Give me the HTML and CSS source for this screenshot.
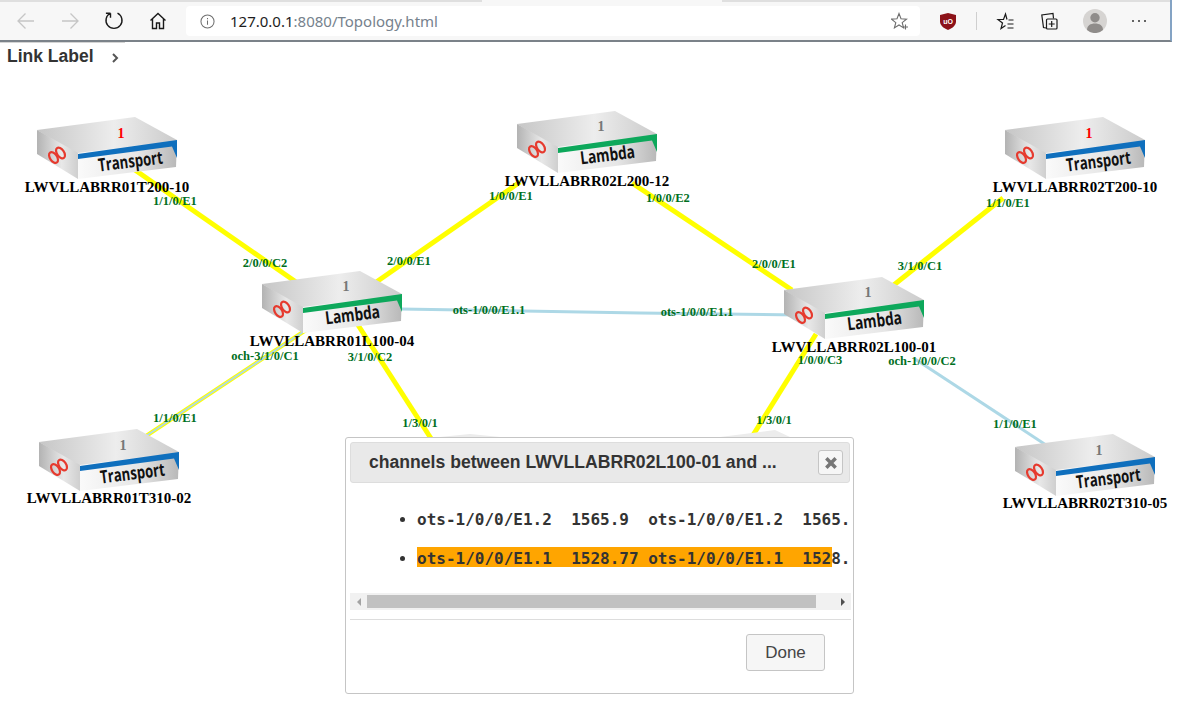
FILE: index.html
```html
<!DOCTYPE html>
<html lang="en">
<head>
  <meta charset="UTF-8" />
  <meta name="viewport" content="width=device-width, initial-scale=1.0" />
  <title>Topology</title>
  <link rel="stylesheet" href="styles.css">
</head>
<body>
  <header class="browser">
    <div class="tabstrip"><span class="tab"></span></div>
    <div class="toolbar">
      <span class="tool"><svg class="ico" viewBox="0 0 20 20"><path class="faint" d="M18 10H2M9.500 2.500 2 10l7.500 7.500"/></svg></span>
      <span class="tool"><svg class="ico" viewBox="0 0 20 20"><path class="faint" d="M2 10h16M10.500 2.500 18 10l-7.500 7.500"/></svg></span>
      <span class="tool"><svg class="ico" viewBox="0 0 20 20"><path class="line" d="M6.500 2.200A8 8 0 1 0 13.500 2.200M6.500 2.200V6.800M6.500 2.200H1.900"/></svg></span>
      <span class="tool"><svg class="ico" viewBox="0 0 20 20"><path class="line" d="M2.500 9.500 10 2.500l7.500 7M4.500 8v9.500h4v-5.500h3v5.500h4V8"/></svg></span>
      <div class="address">
        <svg class="info" viewBox="0 0 16 16"><circle cx="8" cy="8" r="7"/><path d="M8 7v4.500M8 4.200v1.400"/></svg>
        <span class="url"><b>127.0.0.1</b>:8080/Topology.html</span>
        <svg class="fav" viewBox="0 0 18 18"><path d="M8 1.500 10 6.800l5.500.3-4.300 3.500 1.400 5.300L8 13l-4.600 2.900 1.400-5.300L.5 7.100 6 6.800z"/><path d="M14.500 12.500v5M12 15h5"/></svg>
      </div>
      <span class="tool"><svg class="ico" viewBox="0 0 20 20"><path class="shield" d="M10 2 18 4V10.500C18 14.500 14 17.500 10 19 6 17.500 2 14.500 2 10.500V4z"/><text class="ublock" x="10" y="12.500">uO</text></svg></span>
      <span class="sep"></span>
      <span class="tool"><svg class="ico" viewBox="0 0 20 20"><path class="line thin" d="M12 8.500 10.500 3 8.500 8.500H3l4.500 3.500L6 17.500l4.500-3"/><path class="line thin" d="M13.500 9h5M12.500 13h6M12.500 17h6"/></svg></span>
      <span class="tool"><svg class="ico" viewBox="0 0 20 20"><path class="line thin" d="M7 17 4.500 16.500 2.800 4 14 2.500l.5 5"/><rect class="line thin" x="7.500" y="8" width="10.500" height="10" rx="1"/><path class="line thin" d="M12.700 10v6M9.700 13h6"/></svg></span>
      <span class="tool profile"><svg class="avatar" viewBox="0 0 24 24"><circle class="avatar-bg" cx="12" cy="12" r="12"/><circle class="avatar-fg" cx="12" cy="8.700" r="4.700"/><path class="avatar-fg" d="M4 21c0-4.500 3.500-6.500 8-6.500s8 2 8 6.500a12 12 0 0 1-16 0z"/></svg></span>
      <span class="tool"><svg class="dots" viewBox="0 0 16 4"><circle cx="2" cy="2" r="1"/><circle cx="8" cy="2" r="1"/><circle cx="14" cy="2" r="1"/></svg></span>
    </div>
  </header>
  <div class="chrome-edge"></div>

  <div class="link-label">
    <span>Link Label</span>
    <svg class="chevron" viewBox="0 0 8 10"><path d="M2 1l4 4-4 4"/></svg>
  </div>

  <main class="stage">
    <svg class="topology" viewBox="0 70 1180 650">
      <defs>
        <linearGradient id="topFace" x1="0" x2="1" y1="0" y2="0">
          <stop offset="0" stop-color="#c6c6c6"/>
          <stop offset="0.55" stop-color="#ededed"/>
          <stop offset="1" stop-color="#cbcbcb"/>
        </linearGradient>
        <linearGradient id="leftFace" x1="0" x2="1" y1="0" y2="0">
          <stop offset="0" stop-color="#b3b3b3"/>
          <stop offset="0.6" stop-color="#e8e8e8"/>
          <stop offset="1" stop-color="#cfcfcf"/>
        </linearGradient>
        <linearGradient id="frontFace" x1="0" x2="1" y1="0" y2="0">
          <stop offset="0" stop-color="#fafafa"/>
          <stop offset="0.6" stop-color="#e6e6e6"/>
          <stop offset="1" stop-color="#b8b8b8"/>
        </linearGradient>
        <g id="box">
          <path fill="url(#topFace)" d="M0 13 98 0 140 23 41 38z"/>
          <path fill="url(#leftFace)" d="M0 13 41 36V62L0 37z"/>
          <path fill="url(#frontFace)" d="M41 36 140 23 139 50 41 62z"/>
          <ellipse class="logo" cx="16.500" cy="40.500" rx="3.500" ry="6" transform="rotate(-35 16.500 40.500)"/>
          <ellipse class="logo" cx="23.500" cy="36" rx="3.500" ry="6" transform="rotate(-35 23.500 36)"/>
        </g>
        <g id="transport">
          <use href="#box"/>
          <path fill="#0f6fbd" d="M41 37 140 23V41L135 29.500 41 42z"/>
          <text class="model" transform="translate(62 54.500) rotate(-7) scale(.73 1)">Transport</text>
        </g>
        <g id="lambda">
          <use href="#box"/>
          <path fill="#0da85b" d="M41 37 140 23V41L135 29.500 41 42z"/>
          <text class="model" transform="translate(64 53.500) rotate(-7) scale(.76 1)">Lambda</text>
        </g>
      </defs>

      <g class="links">
        <line class="fiber" x1="135" y1="170" x2="296" y2="282"/>
        <line class="fiber" x1="372" y1="285" x2="520" y2="182"/>
        <line class="fiber" x1="632" y1="183" x2="792" y2="290"/>
        <line class="fiber" x1="1003" y1="198" x2="890" y2="288"/>
        <line class="fiber" x1="358" y1="325" x2="432" y2="440"/>
        <line class="fiber" x1="816" y1="334" x2="750" y2="440"/>
        <line class="channel" x1="400" y1="309" x2="640" y2="313"/>
        <line class="channel" x1="640" y1="313" x2="800" y2="315"/>
        <line class="channel" x1="915" y1="359" x2="1046" y2="445"/>
        <line class="fiber thin" x1="146" y1="436" x2="306" y2="330"/>
        <line class="channel thin" x1="146" y1="436" x2="306" y2="330"/>
      </g>

      <path class="peek" d="M440 437 470 434 500 437z"/>
      <path class="peek" d="M720 437 775 430 790 437z"/>

      <g transform="translate(37 117)">
        <use href="#transport"/>
        <text class="count alarm" x="84" y="21">1</text>
        <text class="name" x="70" y="75">LWVLLABRR01T200-10</text>
      </g>
      <g transform="translate(517 111)">
        <use href="#lambda"/>
        <text class="count" x="84" y="20">1</text>
        <text class="name" x="70" y="75">LWVLLABRR02L200-12</text>
      </g>
      <g transform="translate(1005 117)">
        <use href="#transport"/>
        <text class="count alarm" x="84" y="21">1</text>
        <text class="name" x="70" y="75">LWVLLABRR02T200-10</text>
      </g>
      <g transform="translate(262 271)">
        <use href="#lambda"/>
        <text class="count" x="84" y="20">1</text>
        <text class="name" x="70" y="75">LWVLLABRR01L100-04</text>
      </g>
      <g transform="translate(784 277)">
        <use href="#lambda"/>
        <text class="count" x="84" y="20">1</text>
        <text class="name" x="70" y="75">LWVLLABRR02L100-01</text>
      </g>
      <g transform="translate(39 429)">
        <use href="#transport"/>
        <text class="count" x="84" y="21">1</text>
        <text class="name" x="70" y="74">LWVLLABRR01T310-02</text>
      </g>
      <g transform="translate(1015 434)">
        <use href="#transport"/>
        <text class="count" x="84" y="21">1</text>
        <text class="name" x="70" y="74">LWVLLABRR02T310-05</text>
      </g>

      <g class="ports">
        <text x="175" y="205">1/1/0/E1</text>
        <text x="265" y="267">2/0/0/C2</text>
        <text x="409" y="265">2/0/0/E1</text>
        <text x="511" y="200">1/0/0/E1</text>
        <text x="668" y="202">1/0/0/E2</text>
        <text x="774" y="268">2/0/0/E1</text>
        <text x="920" y="270">3/1/0/C1</text>
        <text x="1008" y="207">1/1/0/E1</text>
        <text x="489" y="314">ots-1/0/0/E1.1</text>
        <text x="697" y="316">ots-1/0/0/E1.1</text>
        <text x="265" y="360">och-3/1/0/C1</text>
        <text x="370" y="361">3/1/0/C2</text>
        <text x="820" y="364">1/0/0/C3</text>
        <text x="922" y="365">och-1/0/0/C2</text>
        <text x="175" y="422">1/1/0/E1</text>
        <text x="420" y="427">1/3/0/1</text>
        <text x="774" y="424">1/3/0/1</text>
        <text x="1015" y="428">1/1/0/E1</text>
      </g>
    </svg>

    <section class="dialog">
      <div class="dialog-title">
        <span class="dialog-heading">channels between LWVLLABRR02L100-01 and ...</span>
        <span class="dialog-close"><svg viewBox="0 0 12 12"><path d="M2 2l8 8M10 2l-8 8"/></svg></span>
      </div>
      <div class="dialog-body">
        <ul class="channels">
          <li><span>ots-1/0/0/E1.2  1565.9  ots-1/0/0/E1.2  1565.</span></li>
          <li class="current"><span>ots-1/0/0/E1.1  1528.77 ots-1/0/0/E1.1  1528.</span></li>
        </ul>
      </div>
      <div class="scrollbar">
        <span class="arrow left"></span>
        <div class="track"><div class="thumb"></div></div>
        <span class="arrow right"></span>
      </div>
      <div class="dialog-footer">
        <button class="done">Done</button>
      </div>
    </section>
  </main>
</body>
</html>
```

FILE: styles.css
```css
html, body { margin: 0; padding: 0; background: #fff; }
body { width: 1180px; height: 720px; overflow: hidden; font-family: "Liberation Sans", Arial, sans-serif; }

/* browser chrome */
.browser { width: 1170px; height: 40px; border-right: 2px solid #84a3c4; border-bottom: 2px solid #7b8289; background: #f7f7f7; }
.tabstrip { height: 2px; background: #dfdfdf; display: flex; padding-left: 482px; }
.tab { width: 240px; background: #f7f7f7; }
.toolbar { height: 38px; padding-left: 4px; display: flex; align-items: center; }
.tool { width: 44px; height: 30px; display: flex; align-items: center; justify-content: center; flex: none; }
.ico { width: 20px; height: 20px; fill: none; }
.faint { stroke: #c6c6c6; stroke-width: 1.3; fill: none; }
.line { stroke: #1a1a1a; stroke-width: 1.4; fill: none; }
.line.thin { stroke-width: 1.2; }
.address { width: 734px; height: 30px; margin: 0 6px 0 6px; background: #fff; border-radius: 4px; display: flex; align-items: center; padding: 0 11px 0 14px; box-sizing: border-box; flex: none; }
.info { width: 15px; height: 15px; fill: none; stroke: #6e6e6e; stroke-width: 1.1; flex: none; }
.url { margin-left: 15px; font: 15px "Noto Sans", sans-serif; color: #76828d; flex: 1; }
.url b { font-weight: 400; color: #1d1d1d; }
.fav { width: 18px; height: 18px; fill: none; stroke: #6d6d6d; stroke-width: 1.1; flex: none; }
.shield { fill: #8c1219; stroke: none; }
.ublock { font: bold 7px "Liberation Sans", sans-serif; fill: #fff; text-anchor: middle; }
.sep { width: 1px; height: 18px; background: #cfcfcf; margin: 0 6px 0 6px; flex: none; }
.profile { margin-left: 2px; }
.avatar { width: 24px; height: 24px; }
.avatar-bg { fill: #d6d4d2; }
.avatar-fg { fill: #8f8c8a; }
.dots { width: 16px; height: 4px; fill: #333; }
.chrome-edge { width: 125px; height: 1px; background: #d4d4d4; }

/* label toggle */
.link-label { height: 27px; padding-left: 7px; display: flex; align-items: center; gap: 17px; font-size: 17.500px; font-weight: bold; color: #333; }
.chevron { width: 8px; height: 10px; fill: none; stroke: #555; stroke-width: 2; margin-top: 3px; }

/* topology */
.stage { position: relative; width: 1180px; height: 650px; }
.topology { display: block; width: 1180px; height: 650px; }
.fiber { stroke: #ffff00; stroke-width: 5; }
.fiber.thin { stroke-width: 4; }
.channel { stroke: #add8e6; stroke-width: 3; }
.channel.thin { stroke-width: 2; }
.peek { fill: #ececec; }
.logo { fill: none; stroke: #e63a2e; stroke-width: 2.200; }
.model { font: bold 18px "Open Sans", sans-serif; fill: #111; }
.count { font: bold 14px "Liberation Serif", serif; fill: #777; text-anchor: middle; }
.count.alarm { fill: #ff0000; }
.name { font: bold 15px "Liberation Serif", serif; fill: #000; text-anchor: middle; }
.ports text { font: bold 12.500px "Liberation Serif", serif; fill: #006f1e; text-anchor: middle; }

/* channels dialog */
.dialog { position: absolute; left: 345px; top: 367px; width: 509px; height: 257px; box-sizing: border-box; background: #fff; border: 1px solid #c5c5c5; border-radius: 3px; padding: 4px 2px 4px 4px; display: flex; flex-direction: column; color: #333; }
.dialog-title { height: 41px; flex: none; box-sizing: border-box; background: #e9e9e9; border: 1px solid #dddddd; border-radius: 3px; display: flex; align-items: center; padding: 0 6px 0 18px; margin-right: 1px; }
.dialog-heading { flex: 1; font-size: 17.600px; font-weight: bold; white-space: nowrap; }
.dialog-close { width: 25px; height: 25px; box-sizing: border-box; background: #f6f6f6; border: 1px solid #c5c5c5; border-radius: 3px; display: flex; align-items: center; justify-content: center; }
.dialog-close svg { width: 14px; height: 14px; fill: none; stroke: #777; stroke-width: 3; }
.dialog-body { height: 110px; flex: none; overflow: hidden; }
.channels { margin: 0; padding: 25px 0 0 67px; width: 415px; list-style: disc; }
.channels li { height: 20px; margin-bottom: 19px; font: bold 16px/24px "DejaVu Sans Mono", monospace; white-space: pre; }
.channels li.current { background: #ffa500; }
.scrollbar { height: 17px; flex: none; background: #f1f1f1; display: flex; align-items: center; }
.arrow { width: 17px; flex: none; display: flex; justify-content: center; }
.arrow::before { content: ""; border: 4px solid transparent; }
.arrow.left::before { border-right-color: #a3a3a3; border-left-width: 0; }
.arrow.right::before { border-left-color: #505050; border-right-width: 0; }
.track { flex: 1; height: 13px; }
.thumb { width: 449px; height: 13px; background: #c1c1c1; }
.dialog-footer { margin-top: 9px; border-top: 1px solid #dddddd; flex: 1; display: flex; justify-content: flex-end; align-items: flex-start; padding: 14px 26px 0 0; }
.done { width: 79px; height: 37px; background: #f6f6f6; border: 1px solid #c5c5c5; border-radius: 3px; font: 17px "Liberation Sans", sans-serif; color: #454545; padding: 0; }
```
